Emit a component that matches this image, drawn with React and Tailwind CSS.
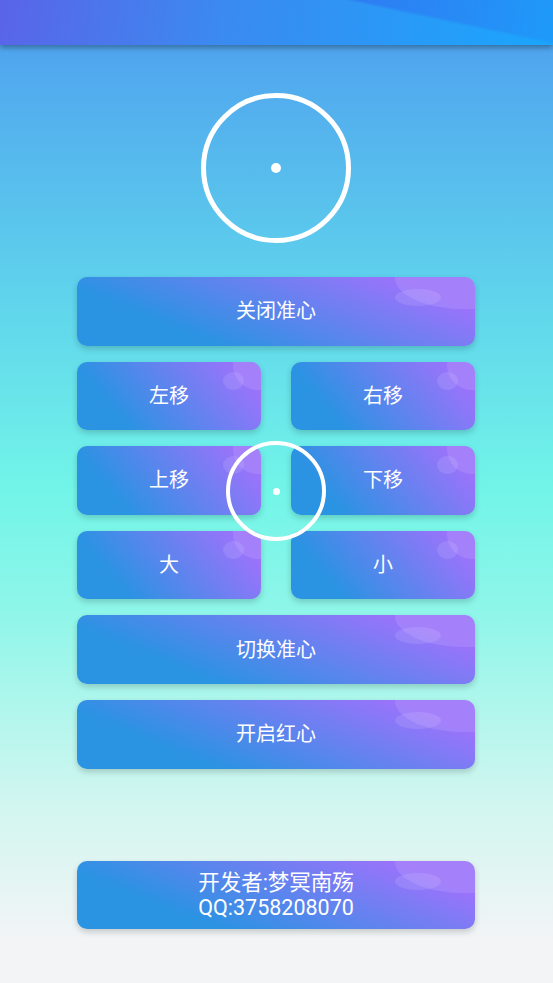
const Btn = ({ children, wide, className = "" }) => (
  <button
    className={`relative overflow-hidden h-[68.6px] rounded-[10px] text-white shadow-[0_3px_6px_rgba(0,0,0,0.18)] ${wide ? "w-[398px] bg-[linear-gradient(22deg,#2a93e2_25%,#9a73fb_85%)]" : "w-[184px] bg-[linear-gradient(50deg,#2a93e2_22%,#9a73fb_88%)]"} ${className}`}
  >
    {wide ? (
      <>
        <span className="absolute -top-[30px] -right-[60px] w-[140px] h-[62px] rounded-[50%] bg-white/10" />
        <span className="absolute top-[12px] right-[34px] w-[46px] h-[17px] rounded-[50%] bg-white/10" />
      </>
    ) : (
      <>
        <span className="absolute -top-[22px] -right-[22px] w-[50px] h-[50px] rounded-full bg-white/10" />
        <span className="absolute top-[10px] right-[17px] w-[21px] h-[18px] rounded-[50%] bg-white/10" />
      </>
    )}
    <span className="relative">{children}</span>
  </button>
);

const App = () => {
  return (
    <div
      className="w-[553px] h-[983px] flex flex-col items-start bg-[linear-gradient(180deg,#4fa3ee_4%,#5fd3ec_30%,#72f5e8_50%,#8ef6e9_62%,#d2f6f0_82%,#f3f4f6_96%)]"
      style={{ fontFamily: '"Roboto", "Noto Sans CJK SC", sans-serif' }}
    >
      {/* header */}
      <div className="relative w-full h-[45px] shrink-0 overflow-hidden shadow-[0_3px_5px_rgba(0,0,0,0.3)] bg-[linear-gradient(100deg,#5a64e8_0%,#3b8af0_40%,#1aa6fd_100%)]">
        <div className="absolute -top-[48px] left-[150px] w-[520px] h-[60px] rotate-[12deg] bg-[linear-gradient(90deg,rgba(45,90,235,0.7),rgba(45,110,240,0.5)_50%,rgba(30,140,250,0))] blur-[1px]" />
      </div>

      {/* big crosshair */}
      <div className="mt-[48px] ml-[201px] w-[150px] h-[150px] rounded-full border-[5px] border-white flex items-center justify-center">
        <div className="w-[10px] h-[10px] rounded-full bg-white" />
      </div>

      {/* buttons */}
      <div className="relative mt-[34px] ml-[77px] w-[398px] flex flex-col gap-[16px] text-[20px]">
        <Btn wide>关闭准心</Btn>
        <div className="flex justify-between">
          <Btn>左移</Btn>
          <Btn>右移</Btn>
        </div>
        <div className="flex justify-between">
          <Btn>上移</Btn>
          <Btn>下移</Btn>
        </div>
        <div className="flex justify-between">
          <Btn>大</Btn>
          <Btn>小</Btn>
        </div>
        <Btn wide>切换准心</Btn>
        <Btn wide>开启红心</Btn>

        {/* small floating crosshair */}
        <div className="absolute left-[149px] top-[164px] w-[100px] h-[100px] rounded-full border-[4px] border-white flex items-center justify-center">
          <div className="w-[7px] h-[7px] rounded-full bg-white" />
        </div>
      </div>

      <Btn wide className="mt-[92px] ml-[77px] text-[21.5px] leading-[25px]">
        开发者:梦冥南殇
        <br />
        QQ:3758208070
      </Btn>
    </div>
  );
};

export default App;
